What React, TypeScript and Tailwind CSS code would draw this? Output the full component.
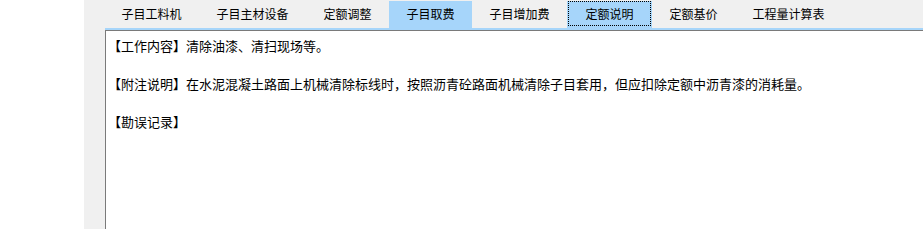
const tabs = [
  "子目工料机",
  "子目主材设备",
  "定额调整",
  "子目取费",
  "子目增加费",
  "定额说明",
  "定额基价",
  "工程量计算表",
];

const lines = [
  "【工作内容】清除油漆、清扫现场等。",
  "【附注说明】在水泥混凝土路面上机械清除标线时，按照沥青砼路面机械清除子目套用，但应扣除定额中沥青漆的消耗量。",
  "【勘误记录】",
];

function Tab({ label }: { label: string }) {
  if (label === "子目取费") {
    return (
      <div className="flex h-[27px] items-center bg-[#a6d5fa] px-[17.5px] pb-px">
        {label}
      </div>
    );
  }
  if (label === "定额说明") {
    return (
      <div className="h-[27px] bg-[#a6d5fa] px-px">
        <div className="flex h-[25px] items-center border border-dotted border-black px-[16.5px]">
          {label}
        </div>
      </div>
    );
  }
  return (
    <div className="flex h-[27px] items-center px-[17.5px] pb-px">{label}</div>
  );
}

export default function App() {
  return (
    <div
      className="flex h-[229px] w-[923px] overflow-hidden bg-white text-black"
      style={{ fontFamily: '"Noto Sans CJK SC", "Microsoft YaHei", sans-serif' }}
    >
      <div className="w-[84px] shrink-0" />
      <div className="flex flex-1 flex-col bg-[#f0f0f0]">
        <div className="flex h-[28px] shrink-0 pl-[20px] pt-px text-[12px] leading-none">
          {tabs.map((t) => (
            <Tab key={t} label={t} />
          ))}
        </div>
        <div className="ml-[21px] h-[2px] shrink-0 bg-[#a6d5fa]" />
        <div className="ml-[21px] flex flex-1 flex-col gap-[19px] border-l border-t border-[#7a7a7a] bg-white pl-[2px] pt-[5px] text-[13px]">
          {lines.map((l) => (
            <div
              key={l}
              className="flex h-[19px] shrink-0 items-center whitespace-nowrap leading-[19px]"
            >
              {l}
            </div>
          ))}
        </div>
      </div>
    </div>
  );
}
